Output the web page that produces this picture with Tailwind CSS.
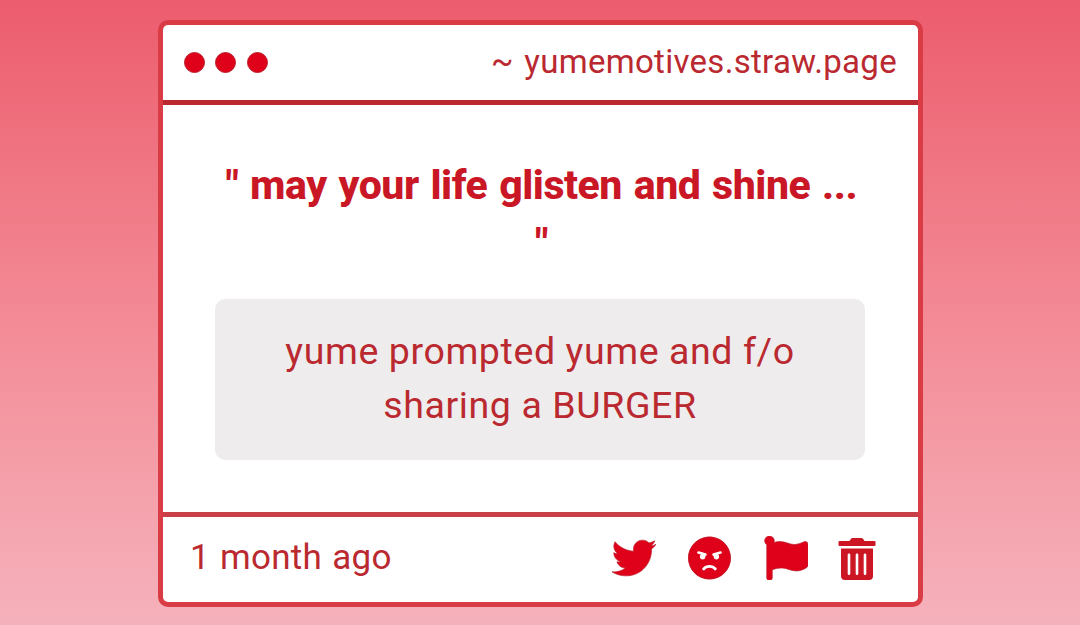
<!DOCTYPE html>
<html lang="en">
<head>
    <meta charset="UTF-8">
    <meta name="viewport" content="width=device-width, initial-scale=1.0">
    <title>yumemotives.straw.page</title>
    <script src="https://cdn.jsdelivr.net/npm/@tailwindcss/browser@4"></script>
</head>
<body class="h-[625px] overflow-hidden bg-linear-to-b from-[#ec5c6e] to-[#f5b2bc] pt-5 font-['Roboto',sans-serif] text-[#bb2930]">
    <div class="ml-[158px] flex h-[587px] w-[765px] flex-col overflow-hidden rounded-[10px] border-[5px] border-[#d93c45] bg-white">
        <!-- Window bar -->
        <header class="flex h-20 shrink-0 items-center justify-between border-b-[5px] border-[#bb2930] pr-[21px] pl-[21px]">
            <div class="flex gap-[10.4px]">
                <span class="size-[21px] rounded-full border border-[#b9202c] bg-[#df0019]"></span>
                <span class="size-[21px] rounded-full border border-[#b9202c] bg-[#df0019]"></span>
                <span class="size-[21px] rounded-full border border-[#b9202c] bg-[#df0019]"></span>
            </div>
            <p class="pb-px text-[33px] leading-[40px] tracking-[0.3px] [word-spacing:2px]">~ yumemotives.straw.page</p>
        </header>

        <!-- Message -->
        <main class="min-h-0 flex-grow pr-[53px] pl-[52px] pt-[51px] text-center">
            <h1 class="pl-[3px] text-[41px] leading-[58px] font-extrabold tracking-[-0.45px] whitespace-nowrap text-[#c91726] [word-spacing:2px]">" may your life glisten and shine ...<br>"</h1>
            <div class="mt-[27px] h-[161px] rounded-[10px] bg-[#eeecec] pt-[25px]">
                <p class="text-[37.5px] leading-[54px] tracking-[0.6px]">yume prompted yume and f/o<br>sharing a BURGER</p>
            </div>
        </main>

        <!-- Date and actions -->
        <footer class="flex h-[90px] shrink-0 items-center justify-between border-t-[5px] border-[#c83f47] pr-[42px] pb-[3px] pl-[27px]">
            <p class="text-[35px] leading-[42px] tracking-[0.3px] [word-spacing:1px]">1 month ago</p>
            <div class="flex items-center text-[#df0019]">
                <svg class="mr-8 size-11" viewBox="0 0 512 512" fill="currentColor" stroke="#b9202c" stroke-width="8">
                    <path d="M459.37 151.716c.325 4.548.325 9.097.325 13.645 0 138.72-105.583 298.558-298.558 298.558-59.452 0-114.68-17.219-161.137-47.106 8.447.974 16.568 1.299 25.34 1.299 49.055 0 94.213-16.568 130.274-44.832-46.132-.975-84.792-31.188-98.112-72.772 6.498.974 12.995 1.624 19.818 1.624 9.421 0 18.843-1.3 27.614-3.573-48.081-9.747-84.143-51.98-84.143-102.985v-1.299c13.969 7.797 30.214 12.67 47.431 13.319-28.264-18.843-46.781-51.005-46.781-87.391 0-19.492 5.197-37.36 14.294-52.954 51.655 63.675 129.3 105.258 216.365 109.807-1.624-7.797-2.599-15.918-2.599-24.04 0-57.828 46.782-104.934 104.934-104.934 30.213 0 57.502 12.67 76.67 33.137 23.715-4.548 46.456-13.32 66.599-25.34-7.798 24.366-24.366 44.833-46.132 57.827 21.117-2.273 41.584-8.122 60.426-16.243-14.292 20.791-32.161 39.308-52.628 54.253z"/>
                </svg>
                <svg class="mr-[33px] h-11 w-[43px]" viewBox="0 0 496 512" fill="currentColor">
                    <path d="M248 8C111 8 0 119 0 256s111 248 248 248 248-111 248-248S385 8 248 8zM136 240c0-9.3 4.1-17.5 10.5-23.4l-31-9.3c-8.5-2.5-13.3-11.5-10.7-19.9 2.5-8.5 11.4-13.2 19.9-10.7l80 24c8.5 2.5 13.3 11.5 10.7 19.9-2.1 6.9-8.4 11.4-15.3 11.4-.5 0-1.1-.2-1.7-.2.7 2.7 1.7 5.3 1.7 8.2 0 17.7-14.3 32-32 32S136 257.7 136 240zm168 154.2c-27.8-33.4-84.2-33.4-112.1 0-13.5 16.3-38.2-4.2-24.6-20.5 20-24 49.4-37.6 80.6-37.6s60.6 13.8 80.6 37.6c13.8 16.5-11.1 36.6-24.5 20.5zm76.6-186.9l-31 9.3c6.3 5.8 10.5 14.1 10.5 23.4 0 17.7-14.3 32-32 32s-32-14.3-32-32c0-2.9.9-5.6 1.7-8.2-.6.1-1.1.2-1.7.2-6.9 0-13.2-4.5-15.3-11.4-2.5-8.5 2.3-17.4 10.7-19.9l80-24c8.4-2.5 17.4 2.3 19.9 10.7 2.5 8.5-2.3 17.4-10.8 19.9z"/>
                    <circle cx="248" cy="256" r="244" fill="none" stroke="#b9202c" stroke-width="8"/>
                </svg>
                <svg class="mr-[30px] size-11" viewBox="0 0 512 512" fill="currentColor" stroke="#b9202c" stroke-width="8">
                    <path d="M349.565 98.783C295.978 98.783 251.721 64 184.348 64c-24.955 0-47.309 4.384-68.045 12.013a55.947 55.947 0 0 0 3.586-23.562C118.117 24.015 94.806 1.206 66.338.048 34.345-1.254 8 24.296 8 56c0 19.026 9.497 35.825 24 45.945V488c0 13.255 10.745 24 24 24h16c13.255 0 24-10.745 24-24v-94.4c28.311-12.064 63.582-22.122 114.435-22.122 53.588 0 97.844 34.783 165.217 34.783 48.169 0 86.667-16.294 122.505-40.858C506.84 359.452 512 349.571 512 339.045v-243.1c0-23.393-24.269-38.87-45.485-29.016-34.338 15.948-76.454 31.854-116.95 31.854z"/>
                </svg>
                <svg class="h-11 w-[38px]" viewBox="0 0 38 44" fill="#cd1624">
                    <path d="M1.5 5H11.5L13 2.8Q13.5 2 14.5 2H23.5Q24.5 2 25 2.8L26.5 5H36.5Q37.5 5 37.5 6V9Q37.5 10 36.5 10H1.5Q.5 10 .5 9V6Q.5 5 1.5 5Z"/>
                    <path fill-rule="evenodd" d="M3 12.5H35V40Q35 44 31 44H7Q3 44 3 40ZM11 17.5Q9.7 17.5 9.7 18.8V37.7Q9.7 39 11 39T12.3 37.7V18.8Q12.3 17.5 11 17.5ZM19 17.5Q17.7 17.5 17.7 18.8V37.7Q17.7 39 19 39T20.3 37.7V18.8Q20.3 17.5 19 17.5ZM27 17.5Q25.7 17.5 25.7 18.8V37.7Q25.7 39 27 39T28.3 37.7V18.8Q28.3 17.5 27 17.5Z"/>
                </svg>
            </div>
        </footer>
    </div>
</body>
</html>
